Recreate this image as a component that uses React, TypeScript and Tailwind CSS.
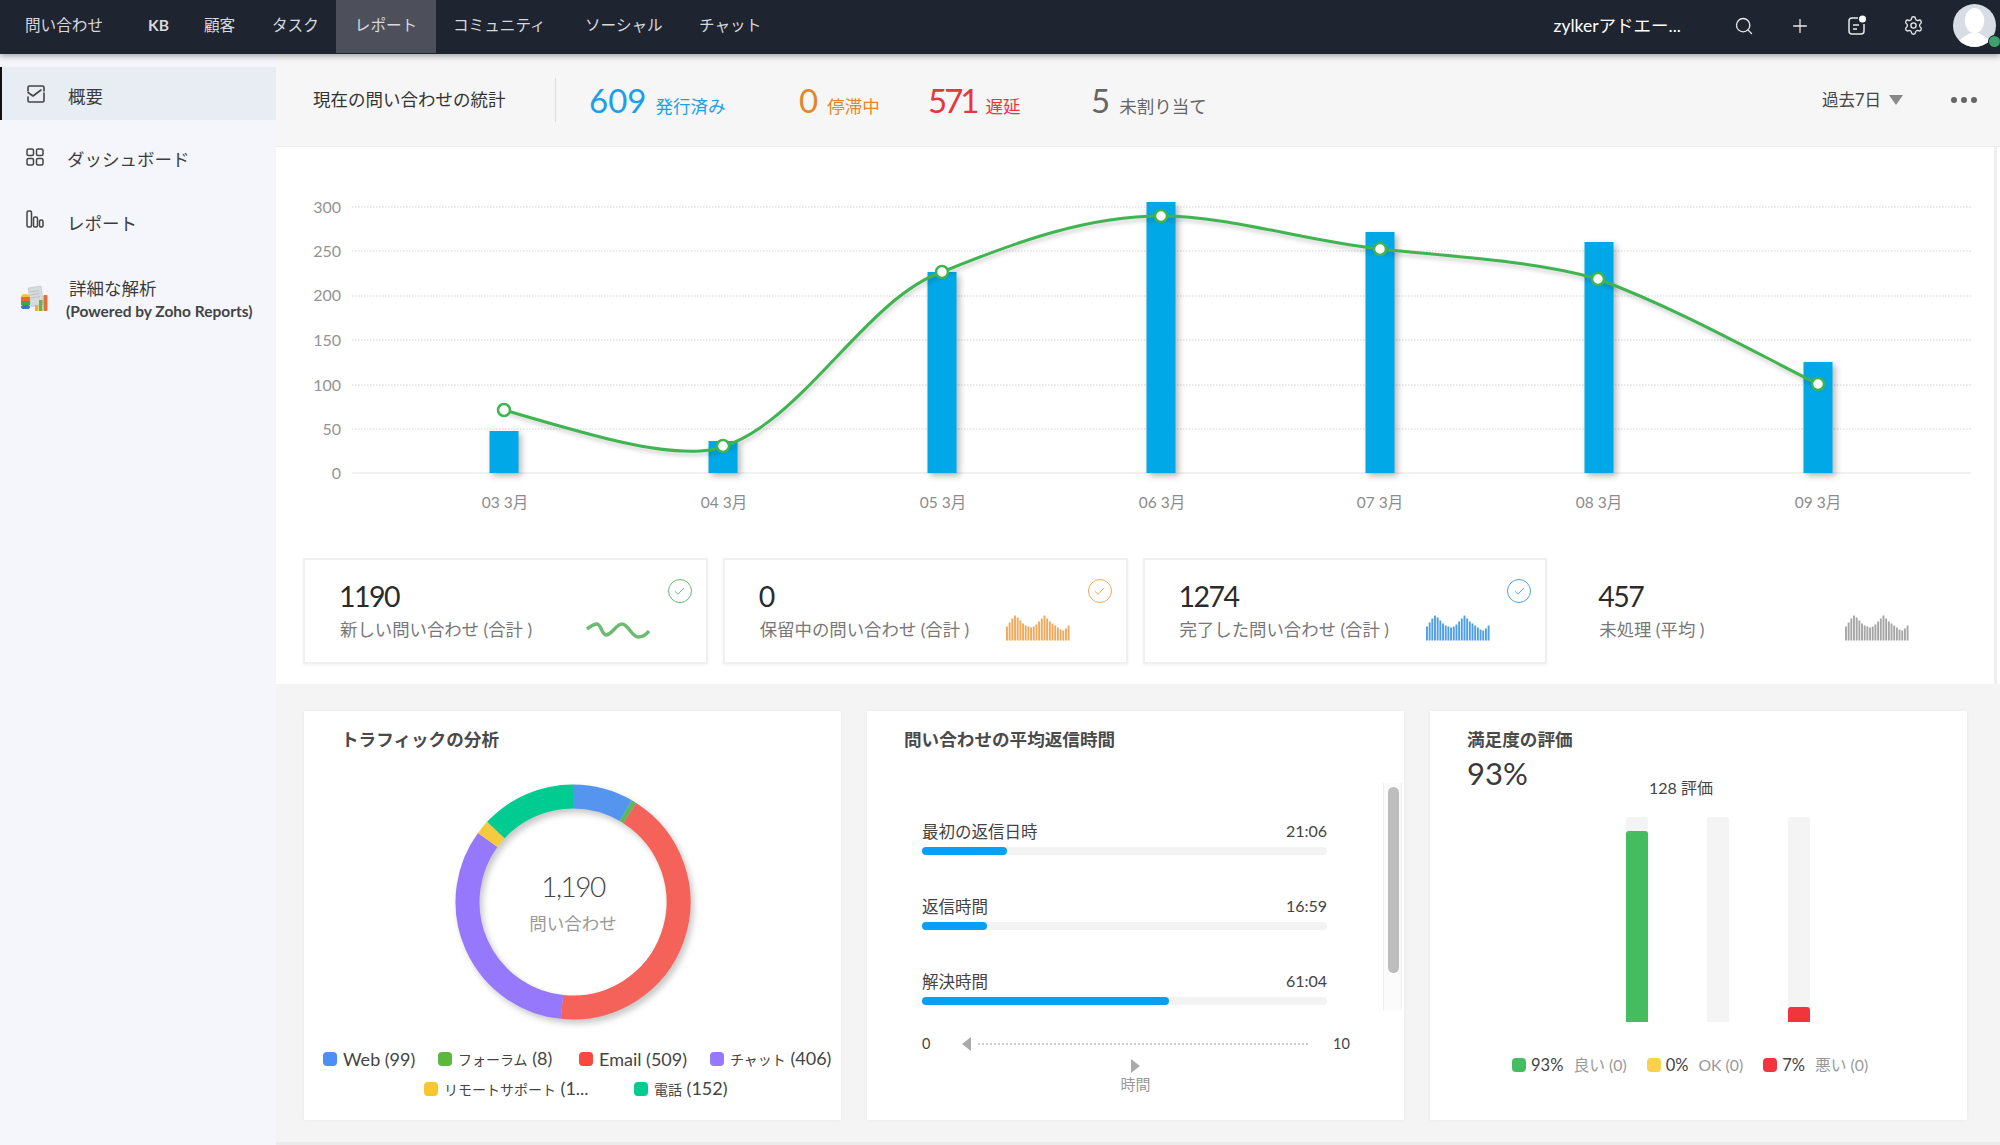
import React from 'react'
import { Search, Plus, Settings, Check } from 'lucide-react'

const font = "font-['Lato','Noto_Sans_CJK_JP',sans-serif]"

const navItems = [
  { label: '問い合わせ', cls: 'ml-[25px] w-[78px]' },
  { label: 'KB', cls: 'ml-[45px] w-[20px] font-bold' },
  { label: '顧客', cls: 'ml-[36px] w-[32px]' },
  { label: 'タスク', cls: 'ml-[36px] w-[46px]' },
]
const navItems2 = [
  { label: 'コミュニティ', cls: 'ml-[17px] w-[94px]' },
  { label: 'ソーシャル', cls: 'ml-[38px] w-[77px]' },
  { label: 'チャット', cls: 'ml-[37px] w-[62px]' },
]

const spark = [14, 18, 22, 25, 23, 20, 17, 15, 14, 13, 14, 16, 19, 22, 25, 22, 19, 17, 15, 13, 11, 10, 12, 15]

const Sparkline = ({ color }: { color: string }) => (
  <svg width="64" height="26" viewBox="0 0 64 26">
    {spark.map((h, i) => (
      <rect key={i} x={i * 2.68} y={25.5 - h} width="1.9" height={h} fill={color} />
    ))}
  </svg>
)

const CheckBadge = ({ cls }: { cls: string }) => (
  <div className={`absolute right-[14px] top-[19px] flex h-[24px] w-[24px] items-center justify-center rounded-full border-[1.5px] ${cls}`}>
    <Check size={13} strokeWidth={1.8} />
  </div>
)

const Stat = ({ value, label, cls, width, tight }: { value: string; label: string; cls: string; width: string; tight?: boolean }) => (
  <div className={`flex items-baseline ${width} ${cls}`}>
    <span className={`text-[33px] leading-none ${tight ? 'tracking-[-3px]' : ''}`}>{value}</span>
    <span className="ml-[9px] text-[17.5px] leading-none">{label}</span>
  </div>
)

const Sidebar = () => (
  <aside className="w-[276px] shrink-0 bg-[#f4f6fb] pt-[13px] text-[#3c3c3c]">
    <div className="flex h-[53px] items-center border-l-2 border-[#111] bg-[#e8ecf3] pl-[24px]">
      <svg width="20" height="20" viewBox="0 0 20 20" fill="none" stroke="#444" strokeWidth="1.6">
        <path d="M2 7V3.5C2 2.6 2.6 2 3.5 2h13c.9 0 1.5.6 1.5 1.5V7M2 13v3.5c0 .9.6 1.5 1.5 1.5h13c.9 0 1.5-.6 1.5-1.5V9" strokeLinecap="round" />
        <path d="M2 8.5l5 3.5 8-6" strokeLinecap="round" strokeLinejoin="round" />
      </svg>
      <span className="ml-[22px] pt-[7px] text-[17.5px]">概要</span>
    </div>
    <div className="mt-[19px] flex h-[36px] items-center pl-[26px]">
      <svg width="18" height="18" viewBox="0 0 18 18" fill="none" stroke="#444" strokeWidth="1.5">
        <rect x="1" y="1" width="6.5" height="6.5" rx="1.5" />
        <rect x="10.5" y="1" width="6.5" height="6.5" rx="1.5" />
        <rect x="1" y="10.5" width="6.5" height="6.5" rx="1.5" />
        <rect x="10.5" y="10.5" width="6.5" height="6.5" rx="1.5" />
      </svg>
      <span className="ml-[23px] pt-[7px] text-[17.5px]">ダッシュボード</span>
    </div>
    <div className="mt-[26px] flex h-[36px] items-center pl-[26px]">
      <svg width="18" height="18" viewBox="0 0 18 18" fill="none" stroke="#444" strokeWidth="1.5">
        <rect x="1" y="1" width="4.5" height="16" rx="1.5" />
        <rect x="7.5" y="7" width="4" height="10" rx="1.5" />
        <rect x="13.5" y="10" width="3.5" height="7" rx="1.5" />
      </svg>
      <span className="ml-[23px] pt-[10px] text-[17.5px]">レポート</span>
    </div>
    <div className="mt-[40px] flex items-center pl-[20px]">
      <svg width="29" height="28" viewBox="0 0 29 28">
        <path d="M8 3l13-2 3 18-13 3z" fill="#d5dadc" stroke="#b8bfc2" strokeWidth="0.5" />
        <path d="M10 7l9-1.5M10.5 10l9-1.5M11 13l9-1.5" stroke="#aeb6ba" strokeWidth="0.7" />
        <ellipse cx="5.5" cy="12" rx="4.5" ry="3" fill="#f4c430" />
        <rect x="1" y="12" width="9" height="4" fill="#ef6a2e" />
        <rect x="1" y="16" width="9" height="4" fill="#39a845" />
        <rect x="1" y="20" width="9" height="4" rx="2" fill="#3477c9" />
        <rect x="15" y="20" width="3.5" height="6" fill="#e8b62c" />
        <rect x="19" y="15" width="3.5" height="11" fill="#6db33f" />
        <rect x="23.5" y="10" width="4" height="16" rx="1" fill="#e0703a" />
      </svg>
      <div className="ml-[19px]">
        <div className="pl-[1px] text-[17.5px] leading-[24px]">詳細な解析</div>
        <div className="-ml-[2px] whitespace-nowrap text-[15.5px] leading-[20px] font-bold text-[#444]">(Powered by Zoho Reports)</div>
      </div>
    </div>
  </aside>
)

const Chart = () => (
  <svg className="block" width="1721" height="391" viewBox="276 147 1721 391">
    <g stroke="#e2e2e2" strokeWidth="1.5" strokeDasharray="1.5 1.5">
      {[207, 251, 296, 340, 385, 429].map((y) => (
        <line key={y} x1="352" x2="1971" y1={y} y2={y} />
      ))}
    </g>
    <line x1="352" x2="1971" y1="473" y2="473" stroke="#ececec" strokeWidth="1.5" />
    <g fill="#949494" fontSize="16" textAnchor="end">
      {[['300', 207], ['250', 251], ['200', 295], ['150', 340], ['100', 385], ['50', 429], ['0', 473]].map(([t, y]) => (
        <text key={t} x="341" y={Number(y) + 6}>{t}</text>
      ))}
    </g>
    <g fill="#00a8e8" className="drop-shadow-[3px_3px_3px_rgba(0,0,0,0.28)]">
      {[[504, 431], [723, 441], [942, 272], [1161, 202], [1380, 232], [1599, 242], [1818, 362]].map(([x, t]) => (
        <rect key={x} x={x - 14.5} y={t} width="29" height={473 - t} />
      ))}
    </g>
    <g fill="#8c8c8c" fontSize="15.5" textAnchor="middle">
      {[['03 3月', 505], ['04 3月', 724], ['05 3月', 943], ['06 3月', 1162], ['07 3月', 1380], ['08 3月', 1599], ['09 3月', 1818]].map(([t, x]) => (
        <text key={t} x={x} y="508">{t}</text>
      ))}
    </g>
    <path
      className="drop-shadow-[1px_3px_2px_rgba(0,0,0,0.2)]"
      d="M504 410C580 432 650 454 700 451C790 446 860 300 942 272C1020 240 1090 216 1161 216C1230 216 1300 240 1380 249C1470 258 1540 262 1598 279C1680 310 1750 350 1818 384"
      fill="none"
      stroke="#3fb451"
      strokeWidth="3"
    />
    <g fill="#fff" stroke="#3fb451" strokeWidth="2.5">
      {[[504, 410], [723, 446], [942, 272], [1161, 216], [1380, 249], [1598, 279], [1818, 384]].map(([x, y]) => (
        <circle key={x} cx={x} cy={y} r="6" />
      ))}
    </g>
  </svg>
)

// donut segment going clockwise, angles in degrees from 12 o'clock
const arc = (a: number, b: number) => {
  const r = 105.5
  const p = (d: number) => {
    const t = ((d - 90) * Math.PI) / 180
    return `${(125 + r * Math.cos(t)).toFixed(2)} ${(125 + r * Math.sin(t)).toFixed(2)}`
  }
  return `M${p(a)}A${r} ${r} 0 ${b - a > 180 ? 1 : 0} 1 ${p(b)}`
}

const Donut = () => (
  <svg width="250" height="250" viewBox="0 0 250 250" className="drop-shadow-[3px_4px_3px_rgba(0,0,0,0.22)]">
    <g fill="none" strokeWidth="24">
      <path d={arc(0, 30)} stroke="#5595f0" />
      <path d={arc(30, 32.5)} stroke="#5cb85c" />
      <path d={arc(32.5, 186)} stroke="#f4625a" />
      <path d={arc(186, 306)} stroke="#9578fb" />
      <path d={arc(306, 313)} stroke="#f7c93e" />
      <path d={arc(313, 360)} stroke="#00cc92" />
    </g>
  </svg>
)

const Legend = ({ color, children, cls = '' }: { color: string; children: React.ReactNode; cls?: string }) => (
  <div className={`flex items-center ${cls}`}>
    <span className={`mr-[6px] h-[14px] w-[14px] shrink-0 rounded-[4px] ${color}`} />
    <span className="whitespace-nowrap">{children}</span>
  </div>
)

const Title = ({ children }: { children: React.ReactNode }) => (
  <h3 className="pl-[37px] pt-[16px] text-[17.6px] leading-[26px] font-bold text-[#4a4a4a]">{children}</h3>
)

const Traffic = () => (
  <section className="h-[409px] bg-white shadow-[0_0_4px_rgba(0,0,0,0.05)]">
    <Title>トラフィックの分析</Title>
    <div className="relative ml-[144px] mt-[24px] flex h-[250px] w-[250px] items-center justify-center">
      <Donut />
      <div className="absolute inset-0 flex flex-col items-center justify-center">
        <div className="text-[28px] leading-[36px] font-light tracking-[-1.5px] text-[#444]">1,190</div>
        <div className="mt-[8px] text-[17.5px] leading-[24px] text-[#999]">問い合わせ</div>
      </div>
    </div>
    <div className="mt-[19px] flex pl-[19px] text-[18px] leading-[24px] text-[#444]">
      <Legend color="bg-[#4a90f5]" cls="w-[115px]">Web (99)</Legend>
      <Legend color="bg-[#5cb83c]" cls="w-[141px]"><span className="text-[14px]">フォーラム</span> (8)</Legend>
      <Legend color="bg-[#f9483f]" cls="w-[131px]">Email (509)</Legend>
      <Legend color="bg-[#9578fb]"><span className="text-[14px]">チャット</span> (406)</Legend>
    </div>
    <div className="mt-[4px] flex pl-[120px] text-[18px] leading-[24px] text-[#444]">
      <Legend color="bg-[#f9c62d]" cls="w-[210px]"><span className="text-[14px]">リモートサポート</span> (1...</Legend>
      <Legend color="bg-[#00cc92]"><span className="text-[14px]">電話</span> (152)</Legend>
    </div>
  </section>
)

const Progress = ({ label, time, pct }: { label: string; time: string; pct: string }) => (
  <div className="mb-[40px]">
    <div className="flex items-center justify-between text-[16.5px] leading-[24px] text-[#444]">
      <span>{label}</span>
      <span className="-mt-[2px] text-[16px]">{time}</span>
    </div>
    <div className="mt-[3px] h-[8px] rounded-full bg-[#f3f3f3]">
      <div className={`h-full rounded-full bg-[#0a9ef5] ${pct}`} />
    </div>
  </div>
)

const ReplyTime = () => (
  <section className="h-[409px] bg-white shadow-[0_0_4px_rgba(0,0,0,0.05)]">
    <Title>問い合わせの平均返信時間</Title>
    <div className="mt-[30px] flex h-[227px]">
      <div className="ml-[55px] w-[405px] pt-[37px]">
        <Progress label="最初の返信日時" time="21:06" pct="w-[85px]" />
        <Progress label="返信時間" time="16:59" pct="w-[65px]" />
        <Progress label="解決時間" time="61:04" pct="w-[247px]" />
      </div>
      <div className="ml-[56px] w-[19px] border-x border-[#eee] bg-[#fbfbfb] pl-[4px] pt-[4px]">
        <div className="h-[186px] w-[11px] rounded-full bg-[#bdbdbd]" />
      </div>
    </div>
    <div className="mt-[24px] flex items-center pl-[55px] text-[14.5px] leading-[20px] text-[#444]">
      <span className="w-[40px]">0</span>
      <span className="h-0 w-0 border-y-[7px] border-r-[9px] border-y-transparent border-r-[#aaa]" />
      <span className="ml-[7px] w-[330px] border-t-2 border-dotted border-[#ccc]" />
      <span className="ml-[25px]">10</span>
    </div>
    <div className="mt-[5px] flex flex-col items-center">
      <span className="h-0 w-0 border-y-[7px] border-l-[9px] border-y-transparent border-l-[#aaa]" />
      <span className="mt-[1px] text-[15px] leading-[20px] text-[#999]">時間</span>
    </div>
  </section>
)

const RatingLegend = ({ color, pct, label }: { color: string; pct: string; label: string }) => (
  <div className="flex items-center">
    <span className={`mr-[5px] h-[14px] w-[14px] rounded-[4px] ${color}`} />
    <span className="mr-[10px] text-[16.5px] text-[#444]">{pct}</span>
    <span className="text-[#999]">{label}</span>
  </div>
)

const RatingBar = ({ fill, color }: { fill: string; color: string }) => (
  <div className="flex h-[205px] w-[22px] flex-col justify-end rounded-t-[3px] bg-[#f4f4f4]">
    <div className={`rounded-t-[3px] ${fill} ${color}`} />
  </div>
)

const Satisfaction = () => (
  <section className="h-[409px] bg-white shadow-[0_0_4px_rgba(0,0,0,0.05)]">
    <Title>満足度の評価</Title>
    <div className="pl-[37px] text-[31px] leading-[40px] text-[#3a3a3a]">93%</div>
    <div className="-mt-[16px] pl-[219px] text-[16px] leading-[22px] text-[#444]">128 評価</div>
    <div className="mt-[18px] ml-[196px] flex gap-x-[59px]">
      <RatingBar fill="h-[191px]" color="bg-[#43bd60]" />
      <RatingBar fill="h-0" color="bg-transparent" />
      <RatingBar fill="h-[15px]" color="bg-[#f0353f]" />
    </div>
    <div className="mt-[31px] ml-[82px] flex gap-x-[20px] text-[15.8px] leading-[24px]">
      <RatingLegend color="bg-[#43bd60]" pct="93%" label="良い (0)" />
      <RatingLegend color="bg-[#fbd04d]" pct="0%" label="OK (0)" />
      <RatingLegend color="bg-[#f0353f]" pct="7%" label="悪い (0)" />
    </div>
  </section>
)

const Card = ({ value, label, check, spark: color, line }: { value: string; label: string; check?: string; spark: string; line?: boolean }) => (
  <div className={`relative flex h-[106px] border-2 pl-[34px] pt-[18px] ${check ? 'border-[#f0f0f0] shadow-[0_1px_3px_rgba(0,0,0,0.06)]' : 'border-transparent'}`}>
    <div className="w-[247px]">
      <div className="text-[28.5px] leading-[36px] tracking-[-1.5px] text-[#2b2b2b]">{value}</div>
      <div className="mt-[4px] whitespace-nowrap pl-[1px] text-[17.4px] leading-[24px] text-[#777]">{label}</div>
    </div>
    {line ? (
      <svg className="mt-[41px]" width="64" height="22" viewBox="0 0 64 22" fill="none" stroke="#6dba72" strokeWidth="3.5">
        <path d="M1 10C5 7 8 5 11 5C15 5 16 16 20 16C26 16 30 5 36 5C42 5 46 18 52 18C56 18 60 16 63 12" />
      </svg>
    ) : (
      <div className="mt-[37px]">
        <Sparkline color={color} />
      </div>
    )}
    {check && <CheckBadge cls={check} />}
  </div>
)

const App = () => {
  return (
    <div className={`flex h-[1145px] w-[2000px] flex-col overflow-hidden bg-[#f4f4f4] ${font}`}>
      <header className="z-10 flex h-[54px] shrink-0 items-start bg-[#1f2431] text-[15.6px] text-[#d7d9de] shadow-[0_2px_6px_rgba(0,0,0,0.35)]">
        <nav className="flex h-[53px] items-center">
          {navItems.map((n) => (
            <span key={n.label} className={`mb-[2px] whitespace-nowrap ${n.cls}`}>{n.label}</span>
          ))}
          <span className="ml-[18px] flex h-full w-[100px] items-center justify-center bg-[#4d505b] pb-[2px]">レポート</span>
          {navItems2.map((n) => (
            <span key={n.label} className={`mb-[2px] whitespace-nowrap ${n.cls}`}>{n.label}</span>
          ))}
        </nav>
        <div className="ml-auto flex h-[54px] items-center text-white">
          <span className="mb-[2px] text-[17.5px]">zylkerアドエー...</span>
          <Search size={20} strokeWidth={1.6} className="mb-[3px] ml-[53px] text-[#e8e8e8]" />
          <Plus size={22} strokeWidth={1.4} className="mb-[3px] ml-[35px] text-[#e8e8e8]" />
          <svg className="mb-[3px] ml-[36px]" width="20" height="22" viewBox="0 0 20 22" fill="none" stroke="#e8e8e8" strokeWidth="1.5">
            <path d="M11 3H5C3.3 3 2 4.3 2 6v10c0 1.7 1.3 3 3 3h9c1.7 0 3-1.3 3-3V9" />
            <path d="M6 10h6M6 14h4" />
            <circle cx="15.5" cy="4" r="3.5" fill="#fff" stroke="none" />
          </svg>
          <Settings size={21} strokeWidth={1.5} className="mb-[3px] ml-[36px] text-[#e8e8e8]" />
          <div className="relative mb-[3px] ml-[29px] mr-[4px] h-[43px] w-[43px] rounded-full bg-[#d8dce4]">
            <svg width="43" height="43" viewBox="0 0 44 44" className="rounded-full">
              <ellipse cx="22" cy="17" rx="10" ry="13" fill="#fff" />
              <path d="M5 44c0-9 8-11 12-14h10c4 3 12 5 12 14z" fill="#fff" />
            </svg>
            <span className="absolute bottom-[0.5px] right-[-3.5px] h-[11px] w-[11px] rounded-full bg-[#3f9f6e] ring-1 ring-[#1f2431]" />
          </div>
        </div>
      </header>

      <div className="flex flex-1">
        <Sidebar />
        <main className="flex min-w-0 flex-1 flex-col border-b-[3px] border-[#ebebeb]">
          <div className="flex h-[93px] items-center border-b border-[#ececec] bg-[#f6f6f6]">
            <span className="ml-[37px] w-[242px] text-[17.5px] text-[#333]">現在の問い合わせの統計</span>
            <span className="h-[44px] w-px bg-[#dcdcdc]" />
            <div className="ml-[33px] flex">
              <Stat value="609" label="発行済み" cls="text-[#1d9fe8]" width="w-[210px]" />
              <Stat value="0" label="停滞中" cls="text-[#e0872a]" width="w-[129px]" />
              <Stat value="571" label="遅延" cls="text-[#e4373f]" width="w-[163px]" tight />
              <Stat value="5" label="未割り当て" cls="text-[#666]" width="w-[200px]" />
            </div>
            <span className="ml-auto text-[16.5px] text-[#444]">過去7日</span>
            <span className="ml-[8px] h-0 w-0 border-x-[7.5px] border-t-[10px] border-x-transparent border-t-[#888]" />
            <span className="ml-[48px] mr-[23px] flex gap-x-[4px]">
              <i className="h-[6px] w-[6px] rounded-full bg-[#666]" />
              <i className="h-[6px] w-[6px] rounded-full bg-[#666]" />
              <i className="h-[6px] w-[6px] rounded-full bg-[#666]" />
            </span>
          </div>

          <div className="h-[537px] bg-white">
            <div className="h-full w-[1721px] border-r-[3px] border-[#eeeeee]">
              <Chart />
              <div className="ml-[27px] mt-[20px] grid w-[1664px] grid-cols-4 gap-x-[15px]">
                <Card value="1190" label="新しい問い合わせ (合計 )" check="border-[#69b86e] text-[#69b86e]" spark="#6dba72" line />
                <Card value="0" label="保留中の問い合わせ (合計 )" check="border-[#f0a95c] text-[#f0a95c]" spark="#f0a95c" />
                <Card value="1274" label="完了した問い合わせ (合計 )" check="border-[#4f9fe8] text-[#4f9fe8]" spark="#4f9fe8" />
                <Card value="457" label="未処理 (平均 )" spark="#a6a6a6" />
              </div>
            </div>
          </div>

          <div className="ml-[28px] mt-[27px] grid w-[1663px] grid-cols-3 gap-x-[26px]">
            <Traffic />
            <ReplyTime />
            <Satisfaction />
          </div>
        </main>
      </div>
    </div>
  )
}

export default App
